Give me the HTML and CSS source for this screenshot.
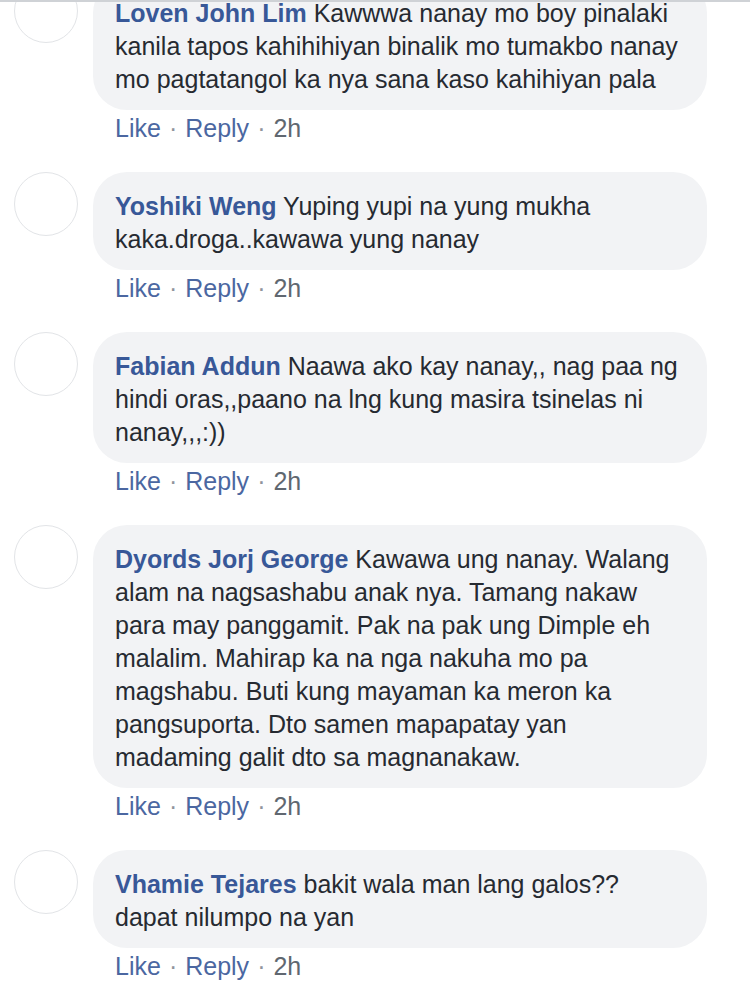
FILE: index.html
```html
<!DOCTYPE html>
<html lang="en">
<head>
<meta charset="UTF-8">
<meta name="viewport" content="width=device-width, initial-scale=1.0">
<title>Comments</title>
<link rel="stylesheet" href="styles.css">
</head>
<body>

<div class="feed">
  <ul class="comments">
    <li class="comment">
      <div class="avatar"></div>
      <div class="body">
        <div class="bubble"><a class="name">Loven John Lim</a> Kawwwa nanay mo boy pinalaki kanila tapos kahihihiyan binalik mo tumakbo nanay mo pagtatangol ka nya sana kaso kahihiyan pala</div>
        <div class="actions"><a>Like</a><span class="dot">·</span><a>Reply</a><span class="dot">·</span><span class="time">2h</span></div>
      </div>
    </li>
    <li class="comment">
      <div class="avatar"></div>
      <div class="body">
        <div class="bubble"><a class="name">Yoshiki Weng</a> Yuping yupi na yung mukha kaka.droga..kawawa yung nanay</div>
        <div class="actions"><a>Like</a><span class="dot">·</span><a>Reply</a><span class="dot">·</span><span class="time">2h</span></div>
      </div>
    </li>
    <li class="comment">
      <div class="avatar"></div>
      <div class="body">
        <div class="bubble"><a class="name">Fabian Addun</a> Naawa ako kay nanay,, nag paa ng hindi oras,,paano na lng kung masira tsinelas ni nanay,,,:))</div>
        <div class="actions"><a>Like</a><span class="dot">·</span><a>Reply</a><span class="dot">·</span><span class="time">2h</span></div>
      </div>
    </li>
    <li class="comment">
      <div class="avatar"></div>
      <div class="body">
        <div class="bubble"><a class="name">Dyords Jorj George</a> Kawawa ung nanay. Walang alam na nagsashabu anak nya. Tamang nakaw para may panggamit. Pak na pak ung Dimple eh malalim. Mahirap ka na nga nakuha mo pa magshabu. Buti kung mayaman ka meron ka pangsuporta. Dto samen mapapatay yan madaming galit dto sa magnanakaw.</div>
        <div class="actions"><a>Like</a><span class="dot">·</span><a>Reply</a><span class="dot">·</span><span class="time">2h</span></div>
      </div>
    </li>
    <li class="comment">
      <div class="avatar"></div>
      <div class="body">
        <div class="bubble"><a class="name">Vhamie Tejares</a> bakit wala man lang galos?? dapat nilumpo na yan</div>
        <div class="actions"><a>Like</a><span class="dot">·</span><a>Reply</a><span class="dot">·</span><span class="time">2h</span></div>
      </div>
    </li>
  </ul>
</div>

</body>
</html>
```
FILE: styles.css
```css
body {
  margin: 0;
  background: #fff;
  font-family: "Liberation Sans", Arial, sans-serif;
  font-size: 25px;
  line-height: 33px;
  color: #262a31;
}
.feed {
  height: 998px;
  border-top: 2px solid #cfd2d6;
  overflow: hidden;
}
.comments {
  list-style-type: none;
  margin: -23px 0 0 0;
  padding: 0;
}
.comment {
  display: flex;
  align-items: flex-start;
  gap: 15px;
  padding-left: 14px;
  margin-bottom: 27px;
}
.avatar {
  flex: none;
  width: 62px;
  height: 62px;
  border: 1px solid #e2e4e7;
  border-radius: 50%;
}
.body {
  display: flex;
  flex-direction: column;
  align-items: flex-start;
}
.bubble {
  max-width: 570px;
  padding: 18px 22px 14px;
  background-color: #f2f3f5;
  border-radius: 34px;
}
.name {
  color: #385898;
  font-weight: bold;
}
.actions {
  padding: 2px 0 0 22px;
  color: #4b67a1;
}
.dot {
  margin: 0 8px;
  color: #90949c;
}
.time {
  color: #606770;
}
```
